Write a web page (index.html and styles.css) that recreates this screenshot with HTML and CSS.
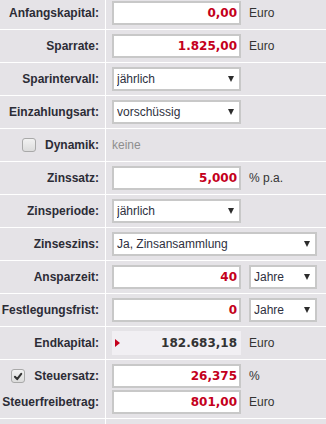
FILE: index.html
```html
<!DOCTYPE html>
<html lang="de">
  <head>
    <meta charset="UTF-8" />
    <meta name="viewport" content="width=device-width, initial-scale=1.0" />
    <title>Sparrechner</title>
    <link rel="stylesheet" href="styles.css">
  </head>

  <body>
    <div class="calc">
      <div class="row">
        <div class="label">Anfangskapital:</div>
        <div class="field">
          <input class="num" type="text" value="0,00" />
          <span class="unit">Euro</span>
        </div>
      </div>

      <div class="row">
        <div class="label">Sparrate:</div>
        <div class="field">
          <input class="num" type="text" value="1.825,00" />
          <span class="unit">Euro</span>
        </div>
      </div>

      <div class="row">
        <div class="label">Sparintervall:</div>
        <div class="field">
          <span class="select"><select><option>jährlich</option></select></span>
        </div>
      </div>

      <div class="row">
        <div class="label">Einzahlungsart:</div>
        <div class="field">
          <span class="select"><select><option>vorschüssig</option></select></span>
        </div>
      </div>

      <div class="row">
        <div class="label"><span class="check"></span>Dynamik:</div>
        <div class="field">
          <span class="muted">keine</span>
        </div>
      </div>

      <div class="row">
        <div class="label">Zinssatz:</div>
        <div class="field">
          <input class="num" type="text" value="5,000" />
          <span class="unit">% p.a.</span>
        </div>
      </div>

      <div class="row">
        <div class="label">Zinsperiode:</div>
        <div class="field">
          <span class="select"><select><option>jährlich</option></select></span>
        </div>
      </div>

      <div class="row">
        <div class="label">Zinseszins:</div>
        <div class="field">
          <span class="select wide"><select><option>Ja, Zinsansammlung</option></select></span>
        </div>
      </div>

      <div class="row">
        <div class="label">Ansparzeit:</div>
        <div class="field">
          <input class="num" type="text" value="40" />
          <span class="select small"><select><option>Jahre</option></select></span>
        </div>
      </div>

      <div class="row">
        <div class="label">Festlegungsfrist:</div>
        <div class="field">
          <input class="num" type="text" value="0" />
          <span class="select small"><select><option>Jahre</option></select></span>
        </div>
      </div>

      <div class="row">
        <div class="label">Endkapital:</div>
        <div class="field">
          <div class="result"><span class="arrow"></span>182.683,18</div>
          <span class="unit">Euro</span>
        </div>
      </div>

      <div class="row double">
        <div class="label">
          <div class="line"><span class="check on">
            <svg width="13" height="13" viewBox="0 0 13 13"><path d="M3.2 6.8 L5.6 9.4 L10 3.6" fill="none" stroke="#333" stroke-width="2.2" stroke-linecap="round" stroke-linejoin="round"/></svg>
          </span>Steuersatz:</div>
          <div class="line">Steuerfreibetrag:</div>
        </div>
        <div class="field">
          <div class="line">
            <input class="num" type="text" value="26,375" />
            <span class="unit">%</span>
          </div>
          <div class="line">
            <input class="num" type="text" value="801,00" />
            <span class="unit">Euro</span>
          </div>
        </div>
      </div>

      <div class="row last">
        <div class="label"></div>
        <div class="field"></div>
      </div>
    </div>
  </body>
</html>
```

FILE: styles.css
```css
body {
  margin: 0;
  background: #e5e3e7;
  font-family: "Liberation Sans", Arial, sans-serif;
  font-size: 12px;
  color: #333;
}

.calc {
  margin-top: -3px;
}

.row {
  display: flex;
  border-bottom: 1px solid #fff;
}

.label {
  width: 99px;
  padding-right: 6px;
  border-right: 1px solid #fff;
  display: flex;
  align-items: center;
  justify-content: flex-end;
  gap: 9px;
  font-weight: bold;
  color: #2c2c36;
  white-space: nowrap;
}

.field {
  flex: 1;
  display: flex;
  align-items: center;
  gap: 8px;
  min-height: 24px;
  padding: 4px 0 4px 6px;
}

.double .label,
.double .field {
  flex-direction: column;
  align-items: stretch;
  gap: 2px;
  padding-top: 4px;
  padding-bottom: 4px;
}

.double .line {
  height: 24px;
  display: flex;
  align-items: center;
  gap: 8px;
}

.double .label .line {
  justify-content: flex-end;
  gap: 9px;
}

.last .field {
  min-height: 12px;
}

input.num {
  width: 129px;
  height: 24px;
  box-sizing: border-box;
  margin: 0;
  border: 2px solid #c8c8c8;
  background: #fff;
  padding: 0 2px;
  text-align: right;
  font-family: "DejaVu Sans", Verdana, sans-serif;
  font-size: 12px;
  font-weight: bold;
  color: #c4001c;
  outline: none;
}

.unit {
  color: #333;
}

.muted {
  color: #8e8e8e;
}

.select {
  position: relative;
  display: inline-block;
  width: 129px;
  height: 24px;
}

.select.wide {
  width: 205px;
}

.select.small {
  width: 68px;
}

.select select {
  appearance: none;
  -webkit-appearance: none;
  width: 100%;
  height: 24px;
  box-sizing: border-box;
  margin: 0;
  border: 2px solid #c8c8c8;
  border-radius: 0;
  background: #fff;
  padding: 0 0 0 3px;
  font-family: "Liberation Sans", Arial, sans-serif;
  font-size: 12px;
  color: #2e3040;
  outline: none;
}

.select::after {
  content: "";
  position: absolute;
  right: 7px;
  top: 9px;
  border-left: 3.5px solid transparent;
  border-right: 3.5px solid transparent;
  border-top: 6px solid #2c2c2c;
  pointer-events: none;
}

.check {
  width: 12px;
  height: 12px;
  border: 1px solid #a9a9a9;
  border-radius: 3px;
  background: linear-gradient(#f2f2f2, #dcdcdc);
  display: inline-flex;
  align-items: center;
  justify-content: center;
}

.check svg {
  display: block;
}

.result {
  width: 129px;
  height: 24px;
  box-sizing: border-box;
  padding: 0 4px 0 3px;
  background: #f1eff3;
  display: flex;
  align-items: center;
  justify-content: space-between;
  font-family: "DejaVu Sans", Verdana, sans-serif;
  font-size: 12px;
  font-weight: bold;
  color: #333;
}

.arrow {
  width: 0;
  height: 0;
  border-left: 5px solid #c4001c;
  border-top: 4px solid transparent;
  border-bottom: 4px solid transparent;
}
```
